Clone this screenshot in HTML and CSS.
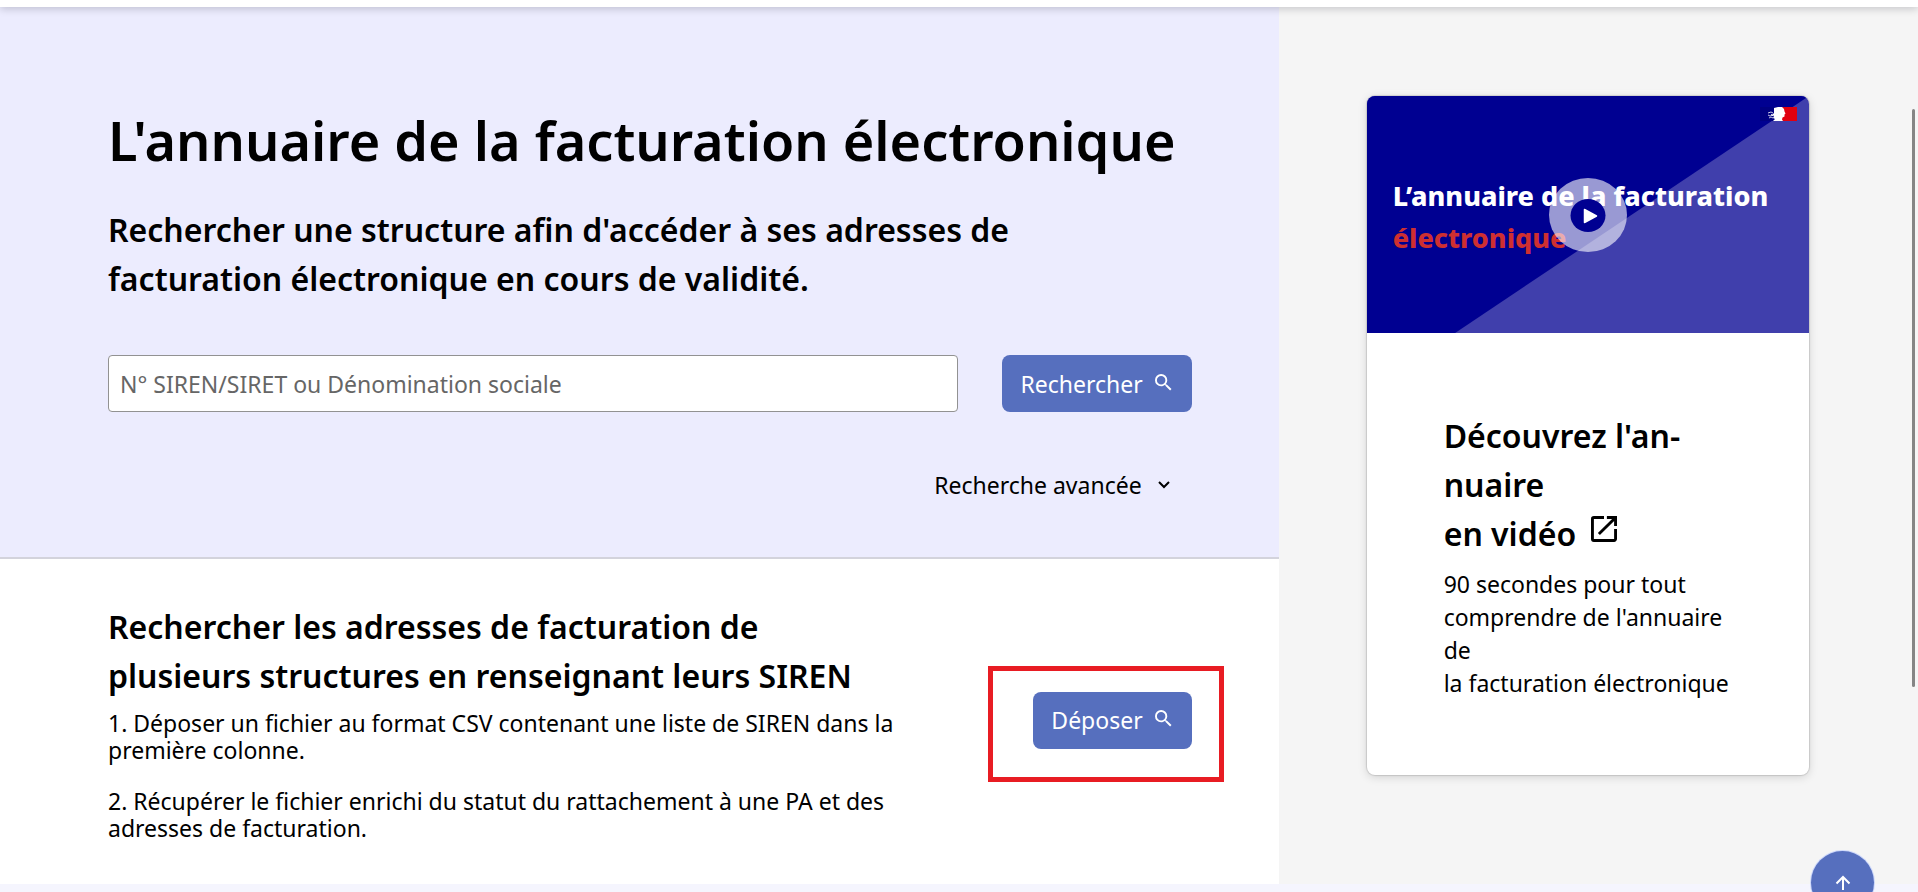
FILE: index.html
```html
<!DOCTYPE html>
<html lang="fr">

<head>
    <meta charset="UTF-8">
    <meta name="viewport" content="width=device-width, initial-scale=1.0">
    <title>L'annuaire de la facturation électronique</title>
    <link rel="stylesheet" href="styles.css">
</head>

<body>
    <header class="header"></header>

    <main class="layout">
        <div class="content">
            <section class="search">
                <h1>L'annuaire de la facturation électronique</h1>
                <h2>Rechercher une structure afin d'accéder à ses adresses de facturation électronique en cours de validité.</h2>

                <form class="search-form">
                    <input class="search-input" type="text" aria-label="N° SIREN/SIRET ou Dénomination sociale"
                        placeholder="N° SIREN/SIRET ou Dénomination sociale">
                    <button class="btn" type="button">
                        Rechercher
                        <svg class="btn-icon" viewBox="3 3 18 18" fill="currentColor">
                            <path d="M15.5 14h-.79l-.28-.27A6.47 6.47 0 0 0 16 9.5 6.5 6.5 0 1 0 9.5 16c1.61 0 3.09-.59 4.23-1.57l.27.28v.79l5 4.99L20.49 19zm-6 0A4.5 4.5 0 1 1 14 9.5 4.49 4.49 0 0 1 9.5 14z" />
                        </svg>
                    </button>
                </form>

                <button class="advanced" type="button">
                    Recherche avancée
                    <svg class="chevron" viewBox="0 0 12 8" fill="none" stroke="currentColor" stroke-width="2">
                        <path d="M1 1l5 5 5-5" />
                    </svg>
                </button>
            </section>

            <section class="upload">
                <div class="upload-text">
                    <h2>Rechercher les adresses de facturation de<br>plusieurs structures en renseignant leurs SIREN</h2>
                    <p>1. Déposer un fichier au format CSV contenant une liste de SIREN dans la<br>première colonne.</p>
                    <p>2. Récupérer le fichier enrichi du statut du rattachement à une PA et des<br>adresses de facturation.</p>
                </div>
                <div class="highlight">
                    <button class="btn" type="button">
                        Déposer
                        <svg class="btn-icon" viewBox="3 3 18 18" fill="currentColor">
                            <path d="M15.5 14h-.79l-.28-.27A6.47 6.47 0 0 0 16 9.5 6.5 6.5 0 1 0 9.5 16c1.61 0 3.09-.59 4.23-1.57l.27.28v.79l5 4.99L20.49 19zm-6 0A4.5 4.5 0 1 1 14 9.5 4.49 4.49 0 0 1 9.5 14z" />
                        </svg>
                    </button>
                </div>
            </section>
        </div>

        <aside class="aside">
            <article class="card">
                <div class="video">
                    <p class="video-title">L’annuaire de la facturation<br><span class="video-accent">électronique</span></p>

                    <!-- Flag logo -->
                    <svg class="flag" width="37" height="14" viewBox="0 0 37 14">
                        <rect width="20" height="14" fill="#000082" />
                        <rect x="20" width="17" height="14" fill="#e1000f" />
                        <path d="M14 1l4-1h4l2 2 .5 2.5 1 2-1 1v2l-2 1-.5 2 1 1.500H13l2-2-2-1 1-2-2-1 2-2z" fill="#fff" />
                        <path d="M8 6l3-1 2 1M8 8l2 1 3-1M9 11l2-1 2 1M11 7l2 2" fill="none" stroke="#fff" stroke-width=".8" />
                    </svg>

                    <!-- Play button -->
                    <svg class="play" width="78" height="74" viewBox="0 0 78 74">
                        <ellipse cx="39" cy="37" rx="39" ry="37" fill="#fff" fill-opacity=".6" />
                        <ellipse cx="39" cy="37.500" rx="17.500" ry="16.500" fill="#000091" />
                        <path d="M35.500 31.500l12 6.500-12 6.500z" fill="#fff" stroke="#fff" stroke-width="1.500" stroke-linejoin="round" />
                    </svg>
                </div>
                <div class="card-body">
                    <h2>
                        <a class="card-link" href="#">Découvrez l'an-<br>nuaire<br>en vidéo
                            <svg class="external" viewBox="3 3 18 18" fill="currentColor">
                                <path d="M19 19H5V5h7V3H5a2 2 0 0 0-2 2v14a2 2 0 0 0 2 2h14c1.100 0 2-.9 2-2v-7h-2zM14 3v2h3.590l-9.830 9.830 1.410 1.410L19 6.410V10h2V3z" />
                            </svg></a>
                    </h2>
                    <p>90 secondes pour tout<br>comprendre de l'annuaire<br>de<br>la facturation électronique</p>
                </div>
            </article>
        </aside>
    </main>

    <footer class="footer"></footer>

    <a class="to-top" href="#" aria-label="Haut de page">
        <svg width="16" height="16" viewBox="0 0 16 16" fill="none" stroke="currentColor" stroke-width="2">
            <path d="M8 15V2M1.500 8.500L8 2l6.500 6.500" />
        </svg>
    </a>
    <div class="scrollbar"></div>
</body>

</html>
```
FILE: styles.css
```css
* {
    box-sizing: border-box;
}

body {
    display: flex;
    flex-direction: column;
    height: 100vh;
    margin: 0;
    overflow: hidden;
    font-family: "Noto Sans", "Open Sans", sans-serif;
    font-size: 23px;
    color: #000;
}

h1,
h2,
p {
    margin: 0;
}

h1,
h2 {
    font-weight: 600;
}

h1 {
    font-size: 54px;
    line-height: 68px;
}

h2 {
    font-size: 32px;
    line-height: 49px;
}

.header {
    position: relative;
    flex: none;
    height: 7px;
    background-color: #fff;
    box-shadow: 0 1px 8px rgba(0, 0, 18, 0.25);
}

.layout {
    display: grid;
    flex: none;
    grid-template-columns: 2fr 1fr;
    background-color: #f5f5f5;
}

/* Search */
.search {
    padding: 99px 87px 46px 108px;
    background-color: #ececfe;
    border-bottom: 2px solid #d3d3dc;
}

.search h2 {
    max-width: 960px;
    margin-top: 31px;
}

.search-form {
    display: flex;
    gap: 44px;
    margin-top: 52px;
}

.search-input {
    flex: 1;
    min-width: 0;
    padding: 0 11px;
    border: 1px solid #929292;
    border-radius: 4px;
    background-color: #fff;
    font: inherit;
}

.search-input::placeholder {
    color: #666;
    opacity: 1;
}

.btn {
    display: flex;
    align-items: center;
    gap: 12px;
    height: 57px;
    padding: 0 20px 0 18px;
    border: 0;
    border-radius: 8px;
    background-color: #566fbe;
    color: #fff;
    font: inherit;
}

.btn-icon {
    width: 17px;
    height: 17px;
    margin-bottom: 3px;
}

.advanced {
    display: flex;
    align-items: center;
    gap: 16px;
    height: 52px;
    margin: 47px 0 0 auto;
    padding: 0 22px;
    border: 0;
    background: none;
    color: inherit;
    font: inherit;
}

.chevron {
    width: 12px;
    height: 8px;
}

/* File upload */
.upload {
    display: flex;
    align-items: center;
    justify-content: space-between;
    padding: 43px 87px 42px 108px;
    background-color: #fff;
}

.upload p {
    margin-bottom: 24px;
    line-height: 27px;
}

.upload h2 {
    margin-bottom: 10px;
}

.upload p:last-child {
    margin-bottom: 0;
}

.highlight {
    position: relative;
    margin-bottom: 4px;
}

.highlight::after {
    content: "";
    position: absolute;
    inset: -26px -32px -33px -45px;
    border: 5px solid #e81c23;
    pointer-events: none;
}

/* Video card */
.aside {
    padding: 89px 109px 0 88px;
}

.card {
    overflow: hidden;
    border-radius: 8px;
    background-color: #fff;
    box-shadow: 0 0 1px 1px rgba(0, 0, 0, 0.12), 0 2px 10px rgba(0, 0, 0, 0.15);
}

.video {
    position: relative;
    height: 237px;
    padding: 79px 26px 0;
    background-color: #403fac;
}

.video::before {
    content: "";
    position: absolute;
    inset: 0;
    background-color: #000091;
    clip-path: polygon(0 0, 100% 0, 20% 100%, 0 100%);
}

.video-title {
    position: relative;
    color: #fff;
    font-size: 27px;
    font-weight: 800;
    line-height: 42px;
    white-space: nowrap;
}

.video-accent {
    color: #ce2f31;
}

.flag {
    position: absolute;
    top: 11px;
    right: 12px;
}

.play {
    position: absolute;
    top: 50%;
    left: 50%;
    transform: translate(-50%, -50%);
}

.card-body {
    padding: 78px 0 75px 77px;
    white-space: nowrap;
}

.card-body p {
    margin-top: 10px;
    line-height: 33px;
}

.card-link {
    color: inherit;
    text-decoration: none;
}

.external {
    width: 26px;
    height: 26px;
    margin-left: 6px;
    vertical-align: 4px;
}

.footer {
    flex: 1;
    background-color: #f5f5fe;
}

.to-top {
    position: fixed;
    right: 44px;
    bottom: -22px;
    display: flex;
    align-items: center;
    justify-content: center;
    width: 63px;
    height: 63px;
    border-radius: 50%;
    background-color: #566fbe;
    box-shadow: 0 0 0 1px #cdd8fb;
    color: #fff;
}

.scrollbar {
    position: fixed;
    top: 109px;
    right: 3px;
    width: 3px;
    height: 578px;
    border-radius: 2px;
    background-color: #858585;
}
```
